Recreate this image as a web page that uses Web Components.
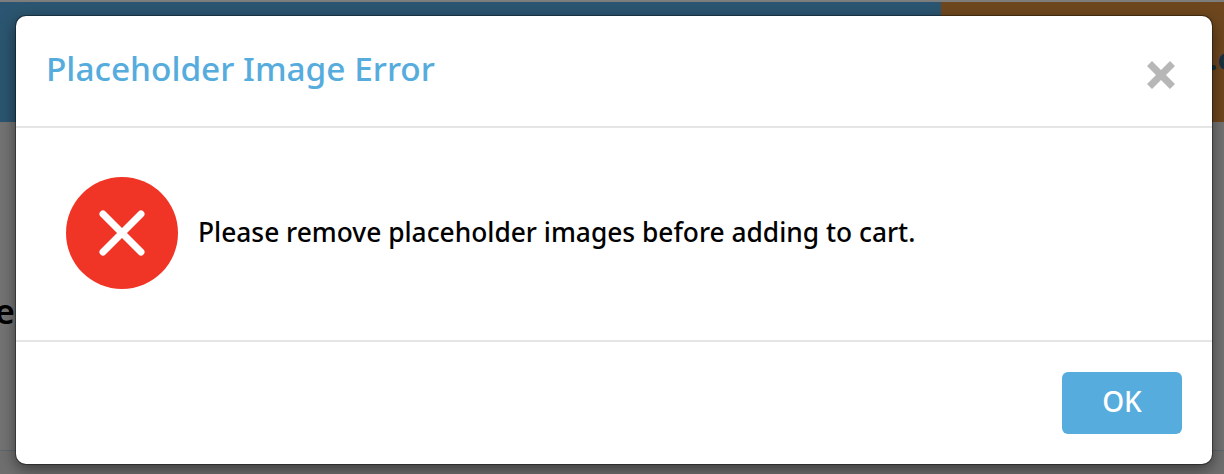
<!DOCTYPE html>
<html>
<head>
<meta charset="utf-8">
<style>
  html, body { margin: 0; padding: 0; height: 100%; overflow: hidden; }
  body { font-family: "Noto Sans", "Open Sans", sans-serif; background: #6f6f6f; }
</style>
</head>
<body>
<page-behind></page-behind>
<error-modal heading="Placeholder Image Error">
  <error-icon slot="icon"></error-icon>
  Please remove placeholder images before adding to cart.
</error-modal>

<script>
class PageBehind extends HTMLElement {
  constructor() {
    super();
    this.attachShadow({ mode: 'open' }).innerHTML = `
      <style>
        :host { display: block; height: 474px; color: #111; overflow: hidden; }
        .top { height: 2px; background: #7d7d7d; }
        .bar { height: 120px; display: grid; grid-template-columns: 941px 1fr; }
        .blue { background: #2b5570; }
        .brown { background: #6e471e; display: flex; align-items: center; justify-content: flex-end;
          font: 700 30px "Noto Sans", sans-serif; color: #173040; padding: 0 0 8px; box-sizing: border-box; margin-right: -9px; }
        .mid { height: 328px; background: #737373; display: flex; align-items: flex-end; }
        .mid span { font: 600 34px "Noto Sans", sans-serif; margin: 0 0 116px -5px; color: #000; }
        .rule { height: 1px; background: #5d676e; }
      </style>
      <div class="top"></div>
      <div class="bar"><div class="blue"></div><div class="brown">.c</div></div>
      <div class="mid"><span>e</span></div>
      <div class="rule"></div>`;
  }
}

class ErrorIcon extends HTMLElement {
  constructor() {
    super();
    this.attachShadow({ mode: 'open' }).innerHTML = `
      <style>:host { display: block; width: 112px; height: 112px; } svg { display: block; }</style>
      <svg width="112" height="112" viewBox="0 0 112 112">
        <circle cx="56" cy="56" r="56" fill="#f03425"/>
        <path d="M37 37L75 75M75 37L37 75" stroke="#fff" stroke-width="7" stroke-linecap="round" fill="none"/>
      </svg>`;
  }
}

class ErrorModal extends HTMLElement {
  constructor() {
    super();
    this.attachShadow({ mode: 'open' }).innerHTML = `
      <style>
        :host { position: absolute; left: 16px; top: 16px; width: 1196px; height: 448px;
          display: flex; flex-direction: column; box-sizing: border-box; background: #fff; border-radius: 10px;
          box-shadow: 0 0 0 1px rgba(0,0,0,.35), 0 5px 15px rgba(0,0,0,.5); font-family: "Noto Sans", "Open Sans", sans-serif; }
        header { height: 110px; flex: none; display: flex; align-items: center; justify-content: space-between;
          padding: 0 37px 0 30px; border-bottom: 2px solid #e5e5e5; }
        h2 { margin: 0 0 6px; font-size: 33.4px; font-weight: 500; color: #55acdd; }
        .close { display: block; margin-top: 8px; }
        main { flex: 1; display: flex; align-items: center; gap: 20px; padding: 0 50px 2px; font-size: 26.33px; font-weight: 500; color: #000;
          border-bottom: 2px solid #e5e5e5; }
        main span { margin-bottom: 2px; }
        footer { height: 122px; flex: none; display: flex; align-items: center; justify-content: flex-end;
          padding: 0 30px; box-sizing: border-box; }
        button { width: 120px; height: 62px; border: 0; border-radius: 6px; background: #55acdd; color: #fff;
          font: 500 28px "Noto Sans", "Open Sans", sans-serif; padding: 0 0 4px; }
      </style>
      <header>
        <h2>${this.getAttribute('heading')}</h2>
        <svg class="close" width="28" height="28" viewBox="0 0 28 28">
          <path d="M5 0L14 9L23 0L28 5L19 14L28 23L23 28L14 19L5 28L0 23L9 14L0 5Z" fill="#b7b7b7"/>
        </svg>
      </header>
      <main><slot name="icon"></slot><span><slot></slot></span></main>
      <footer><button>OK</button></footer>`;
  }
}

customElements.define('page-behind', PageBehind);
customElements.define('error-icon', ErrorIcon);
customElements.define('error-modal', ErrorModal);
</script>
</body>
</html>
